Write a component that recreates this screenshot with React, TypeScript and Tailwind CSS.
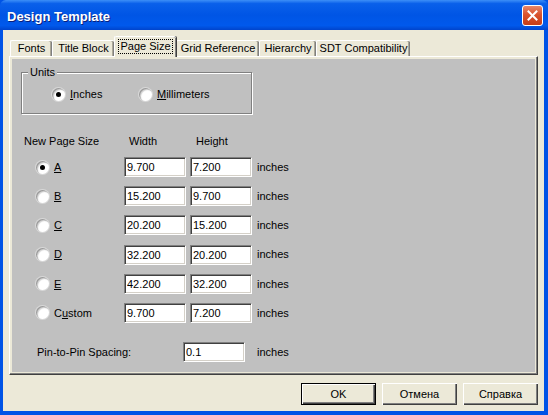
import React from "react";

const font = "font-['Liberation_Sans',Arial,sans-serif]";

const tabs = [
  { label: "Fonts", w: "w-[42px]" },
  { label: "Title Block", w: "w-[62px]" },
  { label: "Page Size", w: "w-[62px]", active: true },
  { label: "Grid Reference", w: "w-[83px]" },
  { label: "Hierarchy", w: "w-[57px]" },
  { label: "SDT Compatibility", w: "w-[94px]" },
];

const sizes = [
  { key: "A", w: "9.700", h: "7.200" },
  { key: "B", w: "15.200", h: "9.700" },
  { key: "C", w: "20.200", h: "15.200" },
  { key: "D", w: "32.200", h: "20.200" },
  { key: "E", w: "42.200", h: "32.200" },
];

function Radio({ checked }: { checked?: boolean }) {
  return (
    <span className="flex h-[13px] w-[13px] shrink-0 items-center justify-center rounded-full bg-white shadow-[inset_1px_1px_0_#9c9c9c,inset_2px_2px_1px_#cfcfcf,0_0_0_1px_#d8d8d8]">
      {checked && <span className="h-[5px] w-[5px] rounded-full bg-black" />}
    </span>
  );
}

function Field({ value, w = "w-[62px]" }: { value: string; w?: string }) {
  return (
    <input
      readOnly
      defaultValue={value}
      className={`${w} h-[20px] shrink-0 border border-t-[#808080] border-l-[#808080] border-b-white border-r-white bg-white pl-[2px] text-[11px] text-black outline-none shadow-[inset_1px_1px_0_#404040,inset_-1px_-1px_0_#d4d0c8] ${font}`}
    />
  );
}

function Button({ children, primary }: { children: React.ReactNode; primary?: boolean }) {
  return (
    <button
      className={`h-[22px] w-[75px] bg-[#ece9d8] text-[11px] text-black ${
        primary
          ? "border border-black shadow-[inset_1px_1px_0_#fff,inset_-1px_-1px_0_#404040,inset_-2px_-2px_0_#808080]"
          : "shadow-[inset_1px_1px_0_#fff,inset_-1px_-1px_0_#404040,inset_-2px_-2px_0_#808080]"
      }`}
    >
      {children}
    </button>
  );
}

export default function App() {
  return (
    <div className={`flex h-[415px] w-[548px] flex-col bg-[#0053e6] ${font} text-[11px] text-black`}>
      {/* Title bar */}
      <div className="flex h-[30px] shrink-0 items-center justify-between rounded-t-[6px] bg-[linear-gradient(to_bottom,#3d8ff7_0%,#0a60ea_12%,#0055e5_50%,#0059ec_85%,#0044cc_100%)] pl-[7px] pr-[5px]">
        <span className="pt-[3px] text-[13px] font-bold text-white [text-shadow:1px_1px_0_#0a1e7a]">
          Design Template
        </span>
        <span className="flex h-[21px] w-[21px] items-center justify-center rounded-[3px] border border-white bg-[linear-gradient(to_bottom,#e8876a_0%,#d9532e_45%,#c63d18_100%)]">
          <svg width="11" height="11" viewBox="0 0 11 11">
            <path d="M1.5 1.5 L9.5 9.5 M9.5 1.5 L1.5 9.5" stroke="white" strokeWidth="2" strokeLinecap="square" />
          </svg>
        </span>
      </div>

      {/* Client area */}
      <div className="mb-[4px] ml-[3px] mr-[4px] flex flex-1 flex-col bg-[#ece9d8] pl-[6px] pt-[7px]">
        {/* Tabs */}
        <div className="flex h-[19px] items-end pl-[1px]">
          {tabs.map((t) =>
            t.active ? (
              <div
                key={t.label}
                className={`${t.w} relative z-10 -mb-[1px] flex h-[21px] items-center justify-center rounded-t-[2px] border-l border-t border-white bg-[#ece9d8] pb-[2px] shadow-[inset_-1px_0_0_#808080,1px_0_0_#404040]`}
              >
                <span className="border border-dotted border-black px-[1px] leading-[13px]">{t.label}</span>
              </div>
            ) : (
              <div
                key={t.label}
                className={`${t.w} flex h-[16px] items-center justify-center rounded-t-[2px] border-l border-t border-white bg-[#ece9d8] shadow-[inset_-1px_0_0_#808080,inset_-2px_0_0_#aca899]`}
              >
                {t.label}
              </div>
            )
          )}
        </div>

        {/* Tab page */}
        <div className="flex h-[319px] w-[529px] flex-col border border-b-[#404040] border-l-white border-r-[#404040] border-t-white p-[2px] shadow-[inset_-1px_-1px_0_#808080]">
          <div className="flex flex-1 flex-col bg-[#c0c0c0] pl-[9px] pt-[13px]">
            {/* Units group */}
            <div className="relative h-[42px] w-[231px] border border-[#808080] shadow-[inset_1px_1px_0_#fff,1px_1px_0_#fff]">
              <span className="absolute -top-[8px] left-[6px] bg-[#c0c0c0] px-[2px] leading-[14px]">Units</span>
              <div className="flex h-full items-center pl-[30px] pt-[2px]">
                <div className="flex w-[87px] items-center gap-[5px]">
                  <Radio checked />
                  <span>
                    <span className="underline">I</span>nches
                  </span>
                </div>
                <div className="flex items-center gap-[5px]">
                  <Radio />
                  <span>
                    <span className="underline">M</span>illimeters
                  </span>
                </div>
              </div>
            </div>

            {/* Header */}
            <div className="-ml-[9px] mt-[20px] flex h-[14px] items-center pl-[12px]">
              <span className="w-[105px]">New Page Size</span>
              <span className="w-[67px]">Width</span>
              <span>Height</span>
            </div>

            {/* Size rows */}
            <div className="-ml-[9px] mt-[9px] flex flex-col gap-[9.2px]">
              {sizes.map((s) => (
                <div key={s.key} className="flex h-[20px] items-center pl-[24px]">
                  <Radio checked={s.key === "A"} />
                  <span className="ml-[5px] w-[70px]">
                    <span className="underline">{s.key}</span>
                  </span>
                  <Field value={s.w} />
                  <span className="w-[4px]" />
                  <Field value={s.h} />
                  <span className="ml-[5px]">inches</span>
                </div>
              ))}
              <div className="flex h-[20px] items-center pl-[24px]">
                <Radio />
                <span className="ml-[5px] w-[70px]">
                  C<span className="underline">u</span>stom
                </span>
                <Field value="9.700" />
                <span className="w-[4px]" />
                <Field value="7.200" />
                <span className="ml-[5px]">inches</span>
              </div>
            </div>

            {/* Pin spacing */}
            <div className="-ml-[9px] mt-[19px] flex h-[20px] items-center pl-[25px]">
              <span className="w-[146px]">Pin-to-Pin Spacing:</span>
              <Field value="0.1" />
              <span className="ml-[12px]">inches</span>
            </div>
          </div>
        </div>

        {/* Buttons */}
        <div className="mr-[6px] mt-[8px] flex justify-end gap-[6px]">
          <Button primary>OK</Button>
          <Button>Отмена</Button>
          <Button>Справка</Button>
        </div>
      </div>
    </div>
  );
}
